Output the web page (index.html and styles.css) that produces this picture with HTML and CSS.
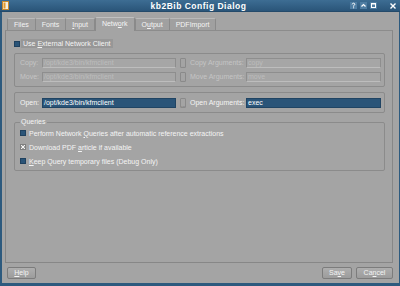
FILE: index.html
```html
<!DOCTYPE html>
<html lang="en">
<head>
    <meta charset="UTF-8">
    <title>kb2Bib Config Dialog</title>
    <link rel="stylesheet" href="styles.css">
</head>
<body>
    <div class="window">
        <!-- Barra de titulo -->
        <header class="titlebar">
            <svg class="app-icon" width="7" height="9" viewBox="0 0 7 9">
                <rect x="0.5" y="0.5" width="6" height="8" fill="#f4f0e0" stroke="#c98a2a"/>
                <rect x="1.5" y="1.5" width="2" height="6" fill="#e39a2c"/>
            </svg>
            <div class="title">kb2Bib Config Dialog</div>
            <div class="title-buttons">
                <span class="tbtn">
                    <svg width="7" height="7" viewBox="0 0 7 7"><path d="M2.2 2.4 Q2.4 1.2 3.6 1.2 Q4.8 1.3 4.8 2.4 Q4.7 3.2 3.6 3.7 L3.6 4.6" fill="none" stroke="#fff" stroke-width="1"/><rect x="3.1" y="5.3" width="1" height="1" fill="#fff"/></svg>
                </span>
                <span class="tbtn">
                    <svg width="7" height="7" viewBox="0 0 7 7"><path d="M1.5 4.5 L3.5 2.5 L5.5 4.5" fill="none" stroke="#fff" stroke-width="1.2"/></svg>
                </span>
                <span class="tbtn">
                    <svg width="7" height="7" viewBox="0 0 7 7"><rect x="1.5" y="1.5" width="4" height="4" fill="none" stroke="#fff" stroke-width="1"/><line x1="1.5" y1="2" x2="5.5" y2="2" stroke="#fff"/></svg>
                </span>
                <span class="tbtn close">
                    <svg width="8" height="8" viewBox="0 0 8 8"><path d="M1.5 1.5 L6.5 6.5 M6.5 1.5 L1.5 6.5" stroke="#fff" stroke-width="1.4"/></svg>
                </span>
            </div>
        </header>

        <div class="client">
            <nav class="tabs">
                <div class="tab">Files</div>
                <div class="tab">Fonts</div>
                <div class="tab"><u>I</u>nput</div>
                <div class="tab active">Netw<u>o</u>rk</div>
                <div class="tab">O<u>u</u>tput</div>
                <div class="tab">PDFImport</div>
            </nav>

            <section class="panel">
                <div class="check-row first">
                    <span class="box"></span>
                    <span class="check-label focus">Use <u>E</u>xternal Network Client</span>
                </div>

                <div class="group">
                    <div class="field-grid">
                        <span class="label disabled">Copy:</span>
                        <span class="input disabled">/opt/kde3/bin/kfmclient</span>
                        <span class="dots disabled">...</span>
                        <span class="label disabled">Copy Arguments:</span>
                        <span class="input disabled">copy</span>

                        <span class="label disabled">Move:</span>
                        <span class="input disabled">/opt/kde3/bin/kfmclient</span>
                        <span class="dots disabled">...</span>
                        <span class="label disabled">Move Arguments:</span>
                        <span class="input disabled">move</span>
                    </div>
                </div>

                <div class="group open-group">
                    <div class="field-grid">
                        <span class="label">Open:</span>
                        <span class="input">/opt/kde3/bin/kfmclient</span>
                        <span class="dots">...</span>
                        <span class="label">Open Arguments:</span>
                        <span class="input">exec</span>
                    </div>
                </div>

                <fieldset class="queries">
                    <legend>Queries</legend>
                    <div class="check-row">
                        <span class="box"></span>
                        <span class="check-label">Perform Network <u>Q</u>ueries after automatic reference extractions</span>
                    </div>
                    <div class="check-row">
                        <span class="box checked">
                            <svg width="6" height="6" viewBox="0 0 6 6"><path d="M1 1 L5 5 M5 1 L1 5" stroke="#f4f4f4" stroke-width="1"/></svg>
                        </span>
                        <span class="check-label">Download PDF <u>a</u>rticle if available</span>
                    </div>
                    <div class="check-row">
                        <span class="box"></span>
                        <span class="check-label"><u>K</u>eep Query temporary files (Debug Only)</span>
                    </div>
                </fieldset>
            </section>

            <footer class="button-bar">
                <button class="button help"><u>H</u>elp</button>
                <div class="spacer"></div>
                <button class="button save">Sa<u>v</u>e</button>
                <button class="button cancel">Ca<u>n</u>cel</button>
            </footer>
        </div>
    </div>
</body>
</html>
```

FILE: styles.css
```css
* {
    box-sizing: border-box;
    margin: 0;
    padding: 0;
}

html, body {
    width: 400px;
    height: 286px;
    overflow: hidden;
}

body {
    font-family: 'Liberation Sans', Arial, sans-serif;
    font-size: 7px;
    color: #f4f4f4;
    background-color: #2d5a7e;
}

u {
    text-decoration-thickness: 1px;
    text-underline-offset: 1px;
}

.window {
    width: 400px;
    height: 286px;
    display: flex;
    flex-direction: column;
}

/* Barra de titulo */
.titlebar {
    height: 12px;
    display: flex;
    align-items: center;
    padding: 0 3px 0 2px;
    background: linear-gradient(#3d6d93, #2a5579);
    border-bottom: 1px solid #244a6a;
}

.app-icon {
    flex: none;
}

.title {
    flex: 1;
    text-align: center;
    font-size: 8.5px;
    font-weight: bold;
    letter-spacing: 0.5px;
    color: #ffffff;
    padding-left: 38px;
}

.title-buttons {
    display: flex;
    gap: 3px;
    align-items: center;
}

.tbtn {
    width: 7px;
    height: 7px;
    display: flex;
    background-color: #4f7da2;
}

.tbtn svg {
    display: block;
}

.tbtn.close {
    width: 8px;
    height: 8px;
    margin-left: 9px;
    background-color: transparent;
}

/* Area del dialogo */
.client {
    flex: 1;
    margin: 0 1px 3px 2px;
    background-color: #a4a4a4;
    display: flex;
    flex-direction: column;
}

.tabs {
    height: 18px;
    display: flex;
    align-items: flex-end;
    padding-left: 5px;
}

.tab {
    height: 12px;
    line-height: 11px;
    padding: 0 6px;
    background-color: #a0a0a0;
    border: 1px solid #8a8a8a;
    border-top-color: #b9b9b9;
    border-bottom: none;
    border-radius: 2px 2px 0 0;
    margin-right: -1px;
}

.tab.active {
    height: 14px;
    line-height: 12px;
    padding: 0 6px;
    background-color: #a4a4a4;
    border-top-color: #c0c0c0;
    margin-bottom: -1px;
    position: relative;
    margin-left: 1px;
    margin-right: 0;
}

.panel {
    height: 233px;
    margin: 0 6px 0 3px;
    border: 1px solid #878787;
    border-top-color: #8c8c8c;
    padding: 8px 7px 0 8px;
    display: flex;
    flex-direction: column;
}

.check-row {
    height: 10px;
    display: flex;
    align-items: center;
    gap: 3px;
}

.check-row.first {
    height: 9px;
    gap: 1px;
}

.box {
    width: 6px;
    height: 6px;
    flex: none;
    background-color: #2a5478;
    border: 1px solid #1f415f;
    display: flex;
}

.box.checked {
    background-color: #a0a0a0;
    border-color: #7e7e7e;
}

.box.checked svg {
    display: block;
    margin: -1px;
}

.check-label {
    line-height: 9px;
    white-space: nowrap;
}

.check-label.focus {
    background-color: #979797;
    padding: 0 2px;
}

.group {
    margin-top: 5px;
    border: 1px solid #8b8b8b;
    border-radius: 2px;
    padding: 4px 3px 4px 5px;
}

.open-group {
    padding-top: 5px;
}

.field-grid {
    display: grid;
    grid-template-columns: 22px 134px 14px 56px 135px;
    grid-auto-rows: 10px;
    row-gap: 4px;
    align-items: center;
}

.label {
    white-space: nowrap;
    line-height: 10px;
}

.label.disabled {
    color: #c4c4c4;
}

.input {
    height: 10px;
    line-height: 8px;
    padding: 0 1px;
    background-color: #2a5478;
    border: 1px solid #204463;
    color: #ffffff;
    white-space: nowrap;
    overflow: hidden;
}

.input.disabled {
    background-color: #a6a6a6;
    border-color: #8e8e8e;
    border-bottom-color: #bdbdbd;
    color: #bcbcbc;
}

.dots {
    justify-self: center;
    width: 6px;
    height: 10px;
    border: 1px solid #8a8a8a;
    border-radius: 1px;
    font-size: 5px;
    line-height: 12px;
    text-align: center;
    overflow: hidden;
    color: #555;
}

.dots.disabled {
    color: #9a9a9a;
}

.queries {
    margin-top: 5px;
    border: 1px solid #8b8b8b;
    border-radius: 2px;
    padding: 2px 0 4px 5px;
    display: flex;
    flex-direction: column;
    gap: 4px;
}

.queries legend {
    line-height: 8px;
    margin-left: 0;
    padding: 0 1px;
}

.queries .check-row {
    gap: 3px;
}

/* Botones inferiores */
.button-bar {
    display: flex;
    align-items: center;
    gap: 4px;
    padding: 4px 6px 0 5px;
}

.spacer {
    flex: 1;
}

.button {
    height: 12px;
    font-family: inherit;
    font-size: 7px;
    line-height: 10px;
    color: #f4f4f4;
    background: linear-gradient(#aeaeae, #9c9c9c);
    border: 1px solid #7c7c7c;
    border-radius: 2px;
}

.help {
    width: 29px;
}

.save {
    width: 30px;
}

.cancel {
    width: 37px;
}
```
